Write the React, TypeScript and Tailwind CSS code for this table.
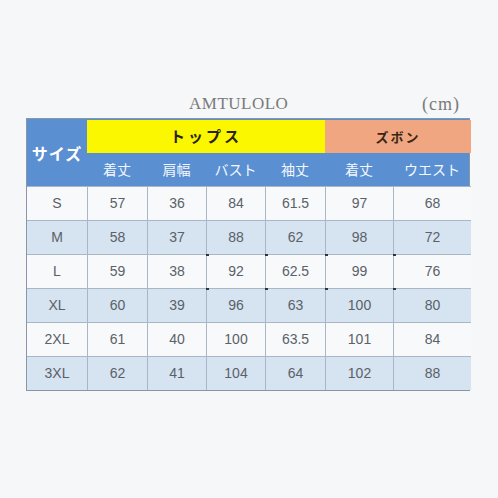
import React from "react";

const rows = [
  ["S", "57", "36", "84", "61.5", "97", "68"],
  ["M", "58", "37", "88", "62", "98", "72"],
  ["L", "59", "38", "92", "62.5", "99", "76"],
  ["XL", "60", "39", "96", "63", "100", "80"],
  ["2XL", "61", "40", "100", "63.5", "101", "84"],
  ["3XL", "62", "41", "104", "64", "102", "88"],
];

const subHeads = ["着丈", "肩幅", "バスト", "袖丈", "着丈", "ウエスト"];

export default function App() {
  return (
    <div className="w-[498px] h-[498px] bg-[#f6f7f8] pt-[93px]">
      {/* title */}
      <div className="flex items-center h-[22px] pl-[189px] pr-[38px] font-['Liberation_Serif','Times_New_Roman',serif] text-[#7a7a7a]">
        <span className="text-[17px] tracking-[0.5px]">AMTULOLO</span>
        <span className="ml-auto text-[18px] tracking-[1px]">(cm)</span>
      </div>

      <div className="ml-[26px] mt-[3px] w-[444px] grid grid-cols-[60px_60px_59px_59px_60px_68px_78px] grid-rows-[34px_33px_repeat(6,34px)] border border-[#8896a6] bg-[#5a8fd2] font-['Noto_Sans_CJK_JP','Noto_Sans',sans-serif]">
        <div className="row-span-2 flex items-center justify-center text-white text-[16px] font-bold tracking-[1px]">
          サイズ
        </div>
        <div className="col-span-4 mt-[1px] flex items-center justify-center bg-[#fbf700] text-[#2b2410] text-[15px] font-bold tracking-[3px]">
          トップス
        </div>
        <div className="col-span-2 mt-[1px] flex items-center justify-center bg-[#f0a781] text-[#3a2416] text-[13px] font-bold tracking-[2px]">
          ズボン
        </div>
        {subHeads.map((h, i) => (
          <div key={i} className="flex items-center justify-center text-[#f4f8ff] text-[14px]">
            {h}
          </div>
        ))}
        {rows.map((r, ri) =>
          r.map((c, ci) => (
            <div
              key={`${ri}-${ci}`}
              className={`relative flex items-center justify-center font-['Liberation_Sans',Arial,sans-serif] text-[14px] text-[#5a6168] border-t border-[#a8b6c5] ${
                ci > 0 ? "border-l" : ""
              } ${ri % 2 === 0 ? "bg-[#f8f9fb]" : "bg-[#d6e3f0]"}`}
            >
              {c}
              {(ri === 2 || ri === 3) && ci >= 3 && (
                <span className="absolute left-[-1px] top-[-1px] w-[3px] h-[2px] bg-[#333]" />
              )}
            </div>
          ))
        )}
      </div>
    </div>
  );
}
